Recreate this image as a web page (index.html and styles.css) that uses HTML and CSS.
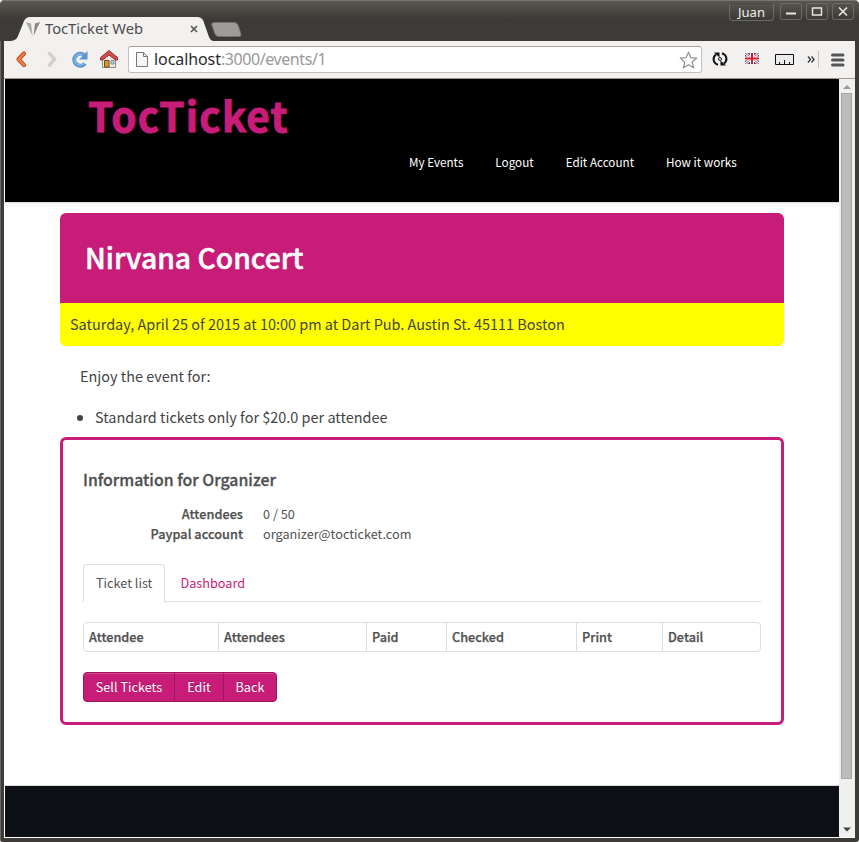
FILE: index.html
```html
<!DOCTYPE html>
<html lang="en">
<head>
<meta charset="utf-8">
<title>TocTicket Web</title>
<link rel="stylesheet" href="styles.css">
</head>
<body>
<div class="window">
  <header class="titlebar">
    <div class="tab">
      <svg class="tab-shape" width="204" height="24" viewBox="0 0 204 24"><path d="M0 24C5 24 8 22 9 19L15 4Q17 0 21 0H188Q192 0 194 3L200 20Q201 23 204 24Z" fill="#f2f1f0"/></svg>
      <svg class="favicon" width="16" height="16" viewBox="0 0 16 16"><path d="M1 1l5 1.500 1.500 12.500z" fill="#aaa"/><path d="M15 1l-5 1.500-1.500 12.500z" fill="#888"/></svg>
      <span class="tab-title">TocTicket Web</span>
      <svg class="tab-close" width="8" height="8" viewBox="0 0 8 8"><path d="M1 1l6 6M7 1L1 7" stroke="#555" stroke-width="1.600"/></svg>
    </div>
    <svg class="new-tab" width="31" height="15" viewBox="0 0 31 15"><path d="M3 .5H23Q26 .5 27 3L30 12Q30.500 14.500 28 14.500H8Q5 14.500 4 12L.8 3Q.3.500 3 .5Z" fill="#9d9c99" stroke="#73726c"/></svg>
    <div class="controls">
      <span class="user">Juan</span>
      <span class="control"><svg width="22" height="17"><path d="M6 10.500h10" stroke="#e9e8e2" stroke-width="2"/></svg></span>
      <span class="control"><svg width="22" height="17"><path d="M6.500 5h9v7h-9z" fill="none" stroke="#e9e8e2" stroke-width="1.400"/></svg></span>
      <span class="control"><svg width="22" height="17"><path d="M7 4.500l8 8M15 4.500l-8 8" stroke="#e9e8e2" stroke-width="1.600"/></svg></span>
    </div>
  </header>
  <div class="toolbar">
    <svg class="nav-icons" width="124" height="37" viewBox="5 41 124 37">
      <path d="M24 53.500l-5.500 5.800 5.500 5.800" fill="none" stroke="#c7451d" stroke-width="4.200" stroke-linecap="round" stroke-linejoin="round"/>
      <path d="M24 53.500l-5.500 5.800 5.500 5.800" fill="none" stroke="#ef7e43" stroke-width="2.400" stroke-linecap="round" stroke-linejoin="round"/>
      <path d="M49.500 53.500l5 5.800-5 5.800" fill="none" stroke="#d2d1d0" stroke-width="3.600" stroke-linecap="round" stroke-linejoin="round"/>
      <path d="M85 63.500A6 6 0 1 1 84 55" fill="none" stroke="#5d96cf" stroke-width="4"/>
      <path d="M87.500 51v8.500h-8.500z" fill="#5d96cf"/>
      <path d="M84.500 63A5.500 5.500 0 1 1 83 54.800" fill="none" stroke="#91bde8" stroke-width="1.200"/>
      <path d="M102.500 58l6.500-5 6.500 5v9.500h-13z" fill="#eceae4" stroke="#8c8984"/>
      <path d="M104.500 60.500h4.500v6.500h-4.500z" fill="#d8982c" stroke="#6e5019"/>
      <path d="M111 60.500h3v3.500h-3z" fill="#b7c8d8" stroke="#8191a0"/>
      <path d="M100.500 57.500v2.500h2l6.500-5 6.500 5h2v-2.500l-8.500-7z" fill="#d44b4b" stroke="#922f2f"/>
    </svg>
    <div class="address">
      <svg class="page-icon" width="12" height="15" viewBox="0 0 12 15"><path d="M.5.5h7l4 4v10H.5z" fill="#f7f7f7" stroke="#777"/><path d="M7.500.5v4h4" fill="none" stroke="#777"/></svg>
      <span class="url"><b>localhost</b>:3000/events/1</span>
      <svg class="star" width="19" height="18" viewBox="0 0 19 18"><path d="M9.500 1.200l2.300 5.400 6 .5-4.600 3.900 1.500 5.800-5.200-3.100-5.200 3.100 1.500-5.800L1.200 7.100l6-.5z" fill="#fff" stroke="#8f8f8f" stroke-width="1.200" stroke-linejoin="round"/></svg>
    </div>
    <svg class="extensions" width="152" height="37" viewBox="702 41 152 37">
      <g fill="none" stroke="#111" stroke-width="2"><path d="M718 64.800C712.500 63 712.500 57 716 54.500M722 53.200C727.500 55 727.500 61 724 63.500"/></g>
      <path d="M714 52.500h5.500v5zM726 65.500h-5.500v-5z" fill="#111"/><circle cx="720" cy="59" r="1.500" fill="#f2f1f0" stroke="#222"/>
      <path d="M745 53h14v11h-14z" fill="#31599f"/><path d="M745 53l14 11M759 53l-14 11" stroke="#fff" stroke-width="2.400"/><path d="M745 53l14 11M759 53l-14 11" stroke="#d44550"/><path d="M752 53v11M745 58.500h14" stroke="#fff" stroke-width="4"/><path d="M752 53v11M745 58.500h14" stroke="#d6202b" stroke-width="2"/>
      <path d="M775.500 54.500h18v10h-18z" fill="#ececec" stroke="#111"/><path d="M779.500 64v-2M784.500 64v-4M789.500 64v-2" stroke="#111"/>
      <path d="M808 56.500l2.500 3-2.500 3M811.500 56.500l2.500 3-2.500 3" fill="none" stroke="#333" stroke-width="1.300"/>
      <path d="M818.500 51v17" stroke="#c4c3c2"/>
      <path d="M832.500 55h10.500M832.500 60h10.500M832.500 65h10.500" stroke="#555" stroke-width="3" stroke-linecap="round"/>
    </svg>
  </div>
  <div class="viewport">
    <div class="page">
      <div class="masthead">
        <div class="brand">TocTicket</div>
        <nav class="menu"><a>My Events</a><a>Logout</a><a>Edit Account</a><a>How it works</a></nav>
      </div>
      <main class="container">
        <section class="event">
          <h1>Nirvana Concert</h1>
          <p>Saturday, April 25 of 2015 at 10:00 pm at Dart Pub. Austin St. 45111 Boston</p>
        </section>
        <p class="intro">Enjoy the event for:</p>
        <ul class="prices"><li>Standard tickets only for $20.0 per attendee</li></ul>
        <section class="organizer">
          <h2>Information for Organizer</h2>
          <dl><dt>Attendees</dt><dd>0 / 50</dd><dt>Paypal account</dt><dd>organizer@tocticket.com</dd></dl>
          <div class="tabs"><a class="active">Ticket list</a><a>Dashboard</a></div>
          <div class="table"><b>Attendee</b><b>Attendees</b><b>Paid</b><b>Checked</b><b>Print</b><b>Detail</b></div>
          <div class="buttons"><a>Sell Tickets</a><a>Edit</a><a>Back</a></div>
        </section>
      </main>
      <footer class="footer"></footer>
    </div>
    <div class="scrollbar">
      <svg width="16" height="14"><path d="M4 10h8l-4-4z" fill="#999"/></svg>
      <div class="thumb"></div>
      <svg class="down" width="16" height="14"><path d="M4 4.500h8l-4 4z" fill="#444"/></svg>
    </div>
  </div>
</div>
</body>
</html>
```
FILE: styles.css
```css
* { box-sizing: border-box; }
body { margin: 0; background: #fff; overflow: hidden; }
svg { display: block; flex: none; }
.window { height: 842px; width: 859px; padding: 0 4px 4px 4px; background: #3c3b37; border-radius: 5px 5px 3px 3px; display: flex; flex-direction: column; box-shadow: inset 1px 0 #69675f, inset 0 1px #55534e; }
.titlebar { height: 41px; flex: none; margin: 0 -4px; padding-left: 9px; display: flex; align-items: flex-end; background: linear-gradient(#55544e 0, #55544e 2px, #3c3b37 18px); border-radius: 5px 5px 0 0; border-top: 1px solid #77756e; }
.tab { width: 204px; height: 24px; display: grid; grid-template-columns: 16px 16px 4px 1fr 8px 15px; align-items: center; }
.tab > * { grid-row: 1; }
.tab-shape { grid-column: 1 / -1; }
.favicon { grid-column: 2; }
.tab-title { grid-column: 4; font: 14.7px/24px "Noto Sans", sans-serif; color: #4c4c4c; white-space: nowrap; margin-top: -2px; }
.tab-close { grid-column: 5; }
.new-tab { margin: 0 0 4px -2px; }
.controls { margin-left: auto; margin-right: 5px; align-self: flex-start; display: flex; gap: 4px; padding-top: 2px; }
.user { width: 45px; height: 18px; margin-right: 2px; border: 1px solid #6b6963; border-top-color: #4a4944; border-radius: 0 0 4px 4px; color: #f0efea; font: 13px/16px "Noto Sans", sans-serif; text-align: center; }
.control { width: 22px; height: 17px; border-radius: 3px; box-shadow: inset 0 0 0 1px #6b6963; }
.toolbar { height: 38px; flex: none; background: #f2f1f0; display: flex; border-bottom: 1px solid #9c9b99; }
.nav-icons { margin-left: 1px; margin-right: -1px; }
.address { width: 574px; height: 27px; margin-top: 5px; border: 1px solid #c0bfbd; border-top-color: #a3a2a0; border-radius: 3px; background: #fff; display: flex; align-items: center; padding: 0 3px 0 7px; }
.url { margin-left: 6px; font: 16px/25px "Noto Sans", sans-serif; color: #999; letter-spacing: -.42px; }
.url b { font-weight: 400; color: #2b2b2b; letter-spacing: -.08px; }
.star { margin-left: auto; }
.viewport { flex: 1; min-height: 0; display: flex; padding-left: 1px; background: #fff; border-bottom: 1px solid #fff; }
.page { flex: 1; display: flex; flex-direction: column; font: 12.7px/20px "Noto Sans CJK SC", sans-serif; color: #505050; background: #fff; }
.masthead { height: 124px; background: #000; border-bottom: 1px solid #ddd; box-shadow: 0 2px 5px rgba(0,0,0,.06); display: flex; flex-direction: column; }
.brand { padding-left: 83px; font: 700 40.5px/52px "Noto Sans CJK SC", sans-serif; letter-spacing: 1.2px; -webkit-text-stroke: 1px #c71c77; color: #c71c77; margin-top: 10px; white-space: nowrap; }
.menu { display: flex; gap: 32px; padding-left: 404px; margin-top: 11px; color: #fff; font-size: 11.7px; white-space: nowrap; }
.container { width: 724px; margin: 10px 0 0 55px; }
.event { border-radius: 6px; overflow: hidden; height: 133px; }
.event h1 { margin: 0; height: 90px; padding: 0 25px; background: #c71c77; color: #fff; font-size: 28.3px; line-height: 88px; font-weight: 500; -webkit-text-stroke: .5px; }
.event p { margin: 0; height: 43px; background: #ff0; color: #444; font-size: 14.44px; line-height: 41px; padding: 0 10px; }
.intro { font-size: 14.44px; margin: 20px 20px 0; line-height: 20px; color: #444; }
.prices { margin: 21px 0 0; padding-left: 35px; font-size: 14.46px; line-height: 20px; color: #444; }
.organizer { margin-top: 10px; height: 288px; border: 3px solid #c71c77; border-radius: 6px; padding: 30px 20px 0; }
.organizer h2 { margin: 0; font-size: 15.85px; line-height: 20px; font-weight: 500; -webkit-text-stroke: .3px; }
dl { margin: 14px 0 0; display: grid; grid-template-columns: 160px 1fr; column-gap: 20px; line-height: 20px; }
dt { text-align: right; font-weight: 500; -webkit-text-stroke: .25px; letter-spacing: .04px; }
dd { margin: 0; }
.tabs { margin-top: 20px; height: 38px; display: flex; gap: 2px; border-bottom: 1px solid #ddd; line-height: 36px; }
.tabs a { padding: 1px 13.500px 0; color: #c71c77; }
.tabs .active { height: 38px; width: 82px; padding: 0 12px; border: 1px solid #ddd; border-bottom: 0; border-radius: 4px 4px 0 0; background: #fff; color: #555; white-space: nowrap; }
.table { margin-top: 20px; height: 30px; display: grid; grid-template-columns: 134px 148px 80px 130px 86px 1fr; border: 1px solid #ddd; border-radius: 4px; line-height: 28px; }
.table b { font-weight: 500; padding-left: 5px; -webkit-text-stroke: .25px; }
.table b + b { border-left: 1px solid #ddd; }
.buttons { width: 194px; margin-top: 20px; height: 30px; display: grid; grid-template-columns: 90px 49px 1fr; background: #c71c77; border: 1px solid #a01560; border-radius: 4px; line-height: 28px; color: #fff; text-align: center; box-shadow: inset 0 1px #d4488f; text-shadow: 0 -1px rgba(0,0,0,.2); }
.buttons a + a { border-left: 1px solid #a01560; }
.footer { margin-top: auto; height: 52px; background: #0d1014; border-top: 1px solid #ddd; }
.scrollbar { width: 16px; background: #f0f0f0; display: flex; flex-direction: column; }
.thumb { height: 686px; width: 11px; margin-left: 2px; border: 1px solid #a6a6a6; background: #bcbcbc; }
.down { margin-top: auto; }
```
